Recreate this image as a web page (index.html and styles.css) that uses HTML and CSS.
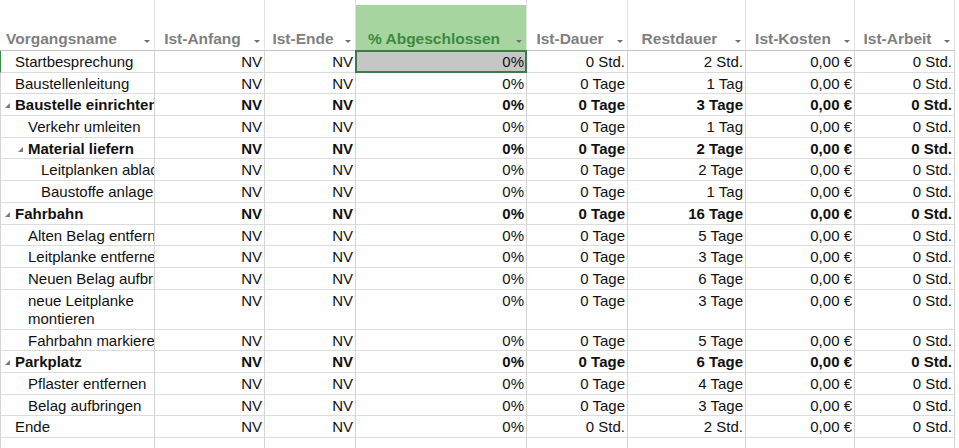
FILE: index.html
```html
<!DOCTYPE html>
<html lang="de">
<head>
<meta charset="utf-8">
<title>Vorgänge</title>
<link rel="stylesheet" href="styles.css">
</head>
<body>
<div class="sheet">
  <div class="row head">
    <div class="hc first"><span class="lbl">Vorgangsname</span><i class="dd"></i></div>
    <div class="hc"><span class="lbl">Ist-Anfang</span><i class="dd"></i></div>
    <div class="hc"><span class="lbl">Ist-Ende</span><i class="dd"></i></div>
    <div class="hc hsel"><span class="lbl">% Abgeschlossen</span><i class="dd"></i></div>
    <div class="hc"><span class="lbl">Ist-Dauer</span><i class="dd"></i></div>
    <div class="hc"><span class="lbl">Restdauer</span><i class="dd"></i></div>
    <div class="hc"><span class="lbl">Ist-Kosten</span><i class="dd"></i></div>
    <div class="hc"><span class="lbl">Ist-Arbeit</span><i class="dd"></i></div>
  </div>

  <div class="row active">
    <div class="c name l0">Startbesprechung</div>
    <div class="c num">NV</div><div class="c num">NV</div>
    <div class="c num sel">0%</div>
    <div class="c num">0 Std.</div><div class="c num">2 Std.</div>
    <div class="c num">0,00 €</div><div class="c num">0 Std.</div>
  </div>
  <div class="row">
    <div class="c name l0">Baustellenleitung</div>
    <div class="c num">NV</div><div class="c num">NV</div><div class="c num">0%</div>
    <div class="c num">0 Tage</div><div class="c num">1 Tag</div>
    <div class="c num">0,00 €</div><div class="c num">0 Std.</div>
  </div>
  <div class="row sum">
    <div class="c name l0"><svg class="tog" viewBox="0 0 5 5"><polygon points="5,0 5,5 0,5"/></svg>Baustelle einrichten</div>
    <div class="c num">NV</div><div class="c num">NV</div><div class="c num">0%</div>
    <div class="c num">0 Tage</div><div class="c num">3 Tage</div>
    <div class="c num">0,00 €</div><div class="c num">0 Std.</div>
  </div>
  <div class="row">
    <div class="c name l1">Verkehr umleiten</div>
    <div class="c num">NV</div><div class="c num">NV</div><div class="c num">0%</div>
    <div class="c num">0 Tage</div><div class="c num">1 Tag</div>
    <div class="c num">0,00 €</div><div class="c num">0 Std.</div>
  </div>
  <div class="row sum">
    <div class="c name l1"><svg class="tog" viewBox="0 0 5 5"><polygon points="5,0 5,5 0,5"/></svg>Material liefern</div>
    <div class="c num">NV</div><div class="c num">NV</div><div class="c num">0%</div>
    <div class="c num">0 Tage</div><div class="c num">2 Tage</div>
    <div class="c num">0,00 €</div><div class="c num">0 Std.</div>
  </div>
  <div class="row">
    <div class="c name l2">Leitplanken abladen</div>
    <div class="c num">NV</div><div class="c num">NV</div><div class="c num">0%</div>
    <div class="c num">0 Tage</div><div class="c num">2 Tage</div>
    <div class="c num">0,00 €</div><div class="c num">0 Std.</div>
  </div>
  <div class="row">
    <div class="c name l2">Baustoffe anlagern</div>
    <div class="c num">NV</div><div class="c num">NV</div><div class="c num">0%</div>
    <div class="c num">0 Tage</div><div class="c num">1 Tag</div>
    <div class="c num">0,00 €</div><div class="c num">0 Std.</div>
  </div>
  <div class="row sum">
    <div class="c name l0"><svg class="tog" viewBox="0 0 5 5"><polygon points="5,0 5,5 0,5"/></svg>Fahrbahn</div>
    <div class="c num">NV</div><div class="c num">NV</div><div class="c num">0%</div>
    <div class="c num">0 Tage</div><div class="c num">16 Tage</div>
    <div class="c num">0,00 €</div><div class="c num">0 Std.</div>
  </div>
  <div class="row">
    <div class="c name l1">Alten Belag entfernen</div>
    <div class="c num">NV</div><div class="c num">NV</div><div class="c num">0%</div>
    <div class="c num">0 Tage</div><div class="c num">5 Tage</div>
    <div class="c num">0,00 €</div><div class="c num">0 Std.</div>
  </div>
  <div class="row">
    <div class="c name l1">Leitplanke entfernen</div>
    <div class="c num">NV</div><div class="c num">NV</div><div class="c num">0%</div>
    <div class="c num">0 Tage</div><div class="c num">3 Tage</div>
    <div class="c num">0,00 €</div><div class="c num">0 Std.</div>
  </div>
  <div class="row">
    <div class="c name l1">Neuen Belag aufbringen</div>
    <div class="c num">NV</div><div class="c num">NV</div><div class="c num">0%</div>
    <div class="c num">0 Tage</div><div class="c num">6 Tage</div>
    <div class="c num">0,00 €</div><div class="c num">0 Std.</div>
  </div>
  <div class="row tall">
    <div class="c name l1 wrap">neue Leitplanke montieren</div>
    <div class="c num">NV</div><div class="c num">NV</div><div class="c num">0%</div>
    <div class="c num">0 Tage</div><div class="c num">3 Tage</div>
    <div class="c num">0,00 €</div><div class="c num">0 Std.</div>
  </div>
  <div class="row">
    <div class="c name l1">Fahrbahn markieren</div>
    <div class="c num">NV</div><div class="c num">NV</div><div class="c num">0%</div>
    <div class="c num">0 Tage</div><div class="c num">5 Tage</div>
    <div class="c num">0,00 €</div><div class="c num">0 Std.</div>
  </div>
  <div class="row sum">
    <div class="c name l0"><svg class="tog" viewBox="0 0 5 5"><polygon points="5,0 5,5 0,5"/></svg>Parkplatz</div>
    <div class="c num">NV</div><div class="c num">NV</div><div class="c num">0%</div>
    <div class="c num">0 Tage</div><div class="c num">6 Tage</div>
    <div class="c num">0,00 €</div><div class="c num">0 Std.</div>
  </div>
  <div class="row">
    <div class="c name l1">Pflaster entfernen</div>
    <div class="c num">NV</div><div class="c num">NV</div><div class="c num">0%</div>
    <div class="c num">0 Tage</div><div class="c num">4 Tage</div>
    <div class="c num">0,00 €</div><div class="c num">0 Std.</div>
  </div>
  <div class="row">
    <div class="c name l1">Belag aufbringen</div>
    <div class="c num">NV</div><div class="c num">NV</div><div class="c num">0%</div>
    <div class="c num">0 Tage</div><div class="c num">3 Tage</div>
    <div class="c num">0,00 €</div><div class="c num">0 Std.</div>
  </div>
  <div class="row">
    <div class="c name l0">Ende</div>
    <div class="c num">NV</div><div class="c num">NV</div><div class="c num">0%</div>
    <div class="c num">0 Std.</div><div class="c num">2 Std.</div>
    <div class="c num">0,00 €</div><div class="c num">0 Std.</div>
  </div>
  <div class="row">
    <div class="c name l0"></div>
    <div class="c num"></div><div class="c num"></div><div class="c num"></div>
    <div class="c num"></div><div class="c num"></div>
    <div class="c num"></div><div class="c num"></div>
  </div>
</div>
</body>
</html>
```

FILE: styles.css
```css
* {
  box-sizing: border-box;
  margin: 0;
  padding: 0;
}

html, body {
  background: #ffffff;
}

body {
  font-family: "Liberation Sans", Arial, sans-serif;
  color: #111111;
  width: 959px;
  height: 448px;
  overflow: hidden;
}

.sheet {
  width: 959px;
}

.row {
  display: grid;
  grid-template-columns: 155px 110px 91px 171px 101px 118px 109px 100px;
  height: 21.7px;
}

.row.tall {
  height: 40px;
}

/* header */
.row.head {
  height: 51px;
}

.hc {
  display: flex;
  align-items: flex-end;
  padding-bottom: 2px;
  border-right: 1px solid #e2e2e2;
  border-bottom: 1px solid #c4c4c4;
  font-size: 15.5px;
  font-weight: bold;
  line-height: 18px;
  color: #7f7f7f;
  white-space: nowrap;
}

.hc .lbl {
  flex: 1;
  text-align: center;
}

.hc.first .lbl {
  text-align: left;
  padding-left: 6px;
}

.hc.hsel {
  background: linear-gradient(to bottom, #ffffff 0, #ffffff 5px, #a7d59f 5px);
  color: #3b8a3f;
}

.dd {
  flex: none;
  width: 0;
  height: 0;
  border-left: 3px solid transparent;
  border-right: 3px solid transparent;
  border-top: 3px solid #6f6f6f;
  margin: 0 4px 5px 4px;
}

/* body cells */
.c {
  border-right: 1px solid #d4d4d4;
  border-bottom: 1px solid #dcdcdc;
  font-size: 15px;
  line-height: 18px;
  padding: 2px 2px 0 2px;
  white-space: nowrap;
}

.c.name {
  border-left: 1px solid #d4d4d4;
  overflow: hidden;
}

.row.active .c.name {
  border-left-color: #3f8a4a;
}

.c.l0 { padding-left: 14px; }
.c.l1 { padding-left: 27px; }
.c.l2 { padding-left: 40px; }

.c.wrap {
  white-space: normal;
  padding-right: 4px;
}

.num {
  text-align: right;
}

.row.sum .c {
  font-weight: bold;
}

.tog {
  width: 5px;
  height: 5px;
  margin-left: -10px;
  margin-right: 5px;
  vertical-align: 2px;
  fill: #7a7a7a;
}

.c.sel {
  position: relative;
  background: #c6c6c6;
}

.c.sel::after {
  content: "";
  position: absolute;
  left: -1px;
  top: -1px;
  right: -1px;
  bottom: -1px;
  border: 2px solid #3d7b45;
}
```
